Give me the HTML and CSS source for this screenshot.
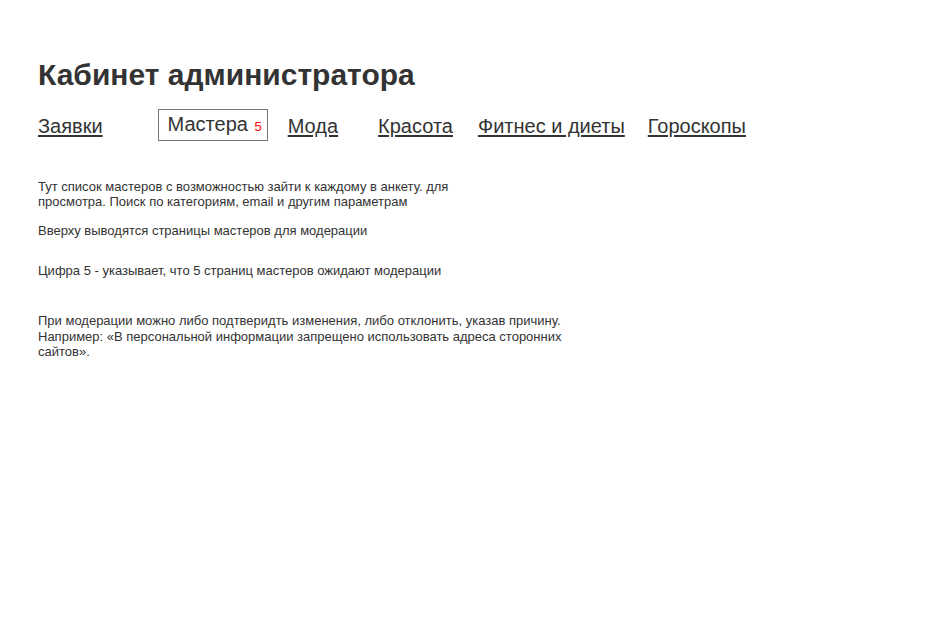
FILE: index.html
```html
<!DOCTYPE html>
<html lang="ru">

<head>
    <meta charset="UTF-8">
    <meta name="viewport" content="width=device-width, initial-scale=1.0">
    <title>Кабинет администратора</title>
    <link rel="stylesheet" href="styles.css">
</head>

<body>

    <div class="page">
        <h1 class="title">Кабинет администратора</h1>

        <nav class="tabs">
            <a href="#" class="tab tab-orders">Заявки</a>
            <a href="#" class="tab tab-masters active">Мастера <span class="count">5</span></a>
            <a href="#" class="tab tab-fashion">Мода</a>
            <a href="#" class="tab tab-beauty">Красота</a>
            <a href="#" class="tab tab-fitness">Фитнес и диеты</a>
            <a href="#" class="tab tab-horo">Гороскопы</a>
        </nav>

        <div class="notes">
            <p class="note note-narrow">Тут список мастеров с возможностью зайти к каждому в анкету. для просмотра. Поиск по категориям, email и другим параметрам</p>
            <p class="note note-top">Вверху выводятся страницы мастеров для модерации</p>
            <p class="note note-count">Цифра 5 - указывает, что 5 страниц мастеров ожидают модерации</p>
            <p class="note note-moder">При модерации можно либо подтверидть изменения, либо отклонить, указав причину. Например: «В персональной информации запрещено использовать адреса сторонних сайтов».</p>
        </div>
    </div>

</body>

</html>
```

FILE: styles.css
```css
* {
    margin: 0;
    padding: 0;
    box-sizing: border-box;
}

body {
    font-family: 'Liberation Sans', Arial, sans-serif;
    color: #333;
    background: #fff;
}

.page {
    padding: 55px 38px 0;
}

.title {
    font-size: 30px;
    font-weight: bold;
    line-height: 40px;
}

.tabs {
    display: flex;
    align-items: center;
    margin-top: 14px;
}

.tab {
    font-size: 20px;
    color: #333;
    line-height: 26px;
    padding-top: 1px;
    text-decoration: underline;
    text-underline-offset: 2px;
}

.tab-orders {
    margin-right: 55px;
}

.tab.active {
    text-decoration: none;
    border: 1px solid #777;
    padding: 1px 5px 0 9px;
    margin-right: 20px;
}

.count {
    color: #f00;
    font-size: 13px;
    margin-left: 1px;
}

.tab-fashion {
    margin-right: 40px;
}

.tab-beauty {
    margin-right: 25px;
}

.tab-fitness {
    margin-right: 23px;
}

.notes {
    margin-top: 38px;
    font-size: 13px;
    line-height: 15px;
    max-width: 540px;
}

.note-narrow {
    max-width: 440px;
}

.note-top {
    margin-top: 14px;
}

.note-count {
    margin-top: 25px;
}

.note-moder {
    margin-top: 35px;
    line-height: 15.5px;
}
```
